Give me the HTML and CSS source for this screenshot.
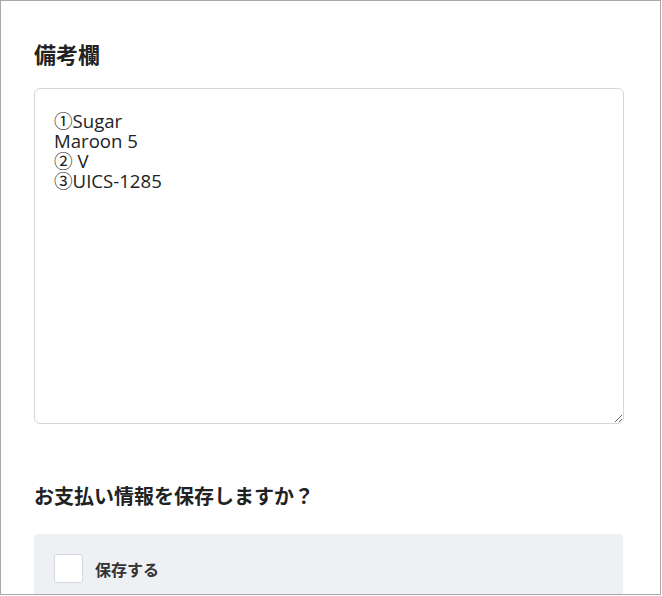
FILE: index.html
```html
<!DOCTYPE html>
<html lang="ja">
<head>
<meta charset="utf-8">
<link rel="stylesheet" href="styles.css">
</head>
<body>
<div class="frame">
  <h2 class="title title-lg">備考欄</h2>
  <textarea class="note">①Sugar
Maroon 5
② V
③UICS-1285</textarea>
  <h2 class="title title-md">お支払い情報を保存しますか？</h2>
  <div class="save-box">
    <label class="save-row">
      <span class="check"></span>
      <span class="save-label">保存する</span>
    </label>
  </div>
</div>
</body>
</html>
```
FILE: styles.css
```css
html, body {
  margin: 0;
  padding: 0;
  background: #fff;
}
.frame {
  width: 661px;
  height: 595px;
  box-sizing: border-box;
  border: 1px solid #a8a8a8;
  overflow: hidden;
  padding: 0 37px 0 33px;
  font-family: "Noto Sans CJK JP", "Noto Sans", sans-serif;
  color: #222;
}
.title {
  margin: 0;
  font-weight: 700;
  color: #222;
}
.title-lg {
  font-size: 22px;
  line-height: 32px;
  margin-top: 36px;
}
.note {
  display: block;
  box-sizing: border-box;
  width: 590px;
  height: 336px;
  margin-top: 19px;
  padding: 22px 19px 20px;
  border: 1px solid #d3d7de;
  border-radius: 6px;
  font-family: "Open Sans", "Noto Sans CJK JP", sans-serif;
  font-size: 18.6px;
  line-height: 20px;
  color: #222;
  background: #fff;
  outline: none;
}
.title-md {
  font-size: 20px;
  line-height: 30px;
  margin-top: 57px;
}
.save-box {
  margin-top: 23px;
  background: #eff0f3;
  border-radius: 4px;
  padding: 20px;
  height: 80px;
}
.save-row {
  display: flex;
  align-items: center;
  gap: 12px;
}
.check {
  width: 29px;
  height: 29px;
  box-sizing: border-box;
  background: #fff;
  border: 1px solid #d3d7de;
  border-radius: 3px;
}
.save-label {
  font-size: 16px;
  font-weight: 600;
  color: #333;
}
```
